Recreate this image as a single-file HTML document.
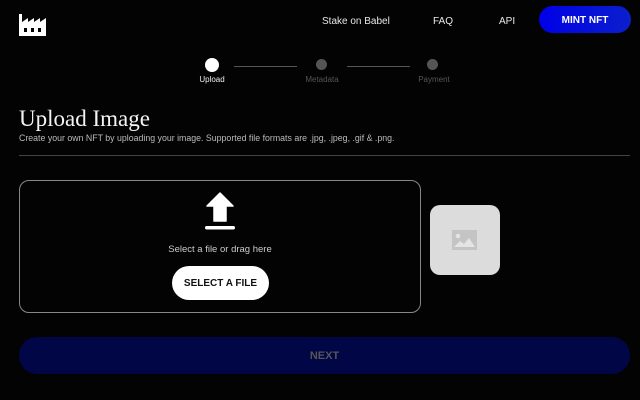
<!DOCTYPE html>
<html><head><meta charset="utf-8"><style>
*{margin:0;padding:0;box-sizing:border-box}
body{width:640px;height:400px;background:#030303;position:relative;overflow:hidden;font-family:"Liberation Sans",sans-serif;color:#fff}
.a{position:absolute}
.nav{font-size:10px;color:#e8e8e8;top:16px}
.lbl{font-size:8px;top:75px;transform:translateX(-50%)}
</style></head><body>
<svg class="a" style="left:16px;top:12px" width="32" height="26" viewBox="0 0 32 26">
<path d="M3 2h3v8l6-4v4l6-4v4l6-4v4l6-4v18H3z" fill="#fff"/>
<rect x="8" y="16" width="3" height="4" fill="#030303"/><rect x="15" y="16" width="3" height="4" fill="#030303"/><rect x="22" y="16" width="3" height="4" fill="#030303"/>
</svg>
<div class="a nav" style="left:322px">Stake on Babel</div>
<div class="a nav" style="left:433px">FAQ</div>
<div class="a nav" style="left:499px">API</div>
<div class="a" style="left:539px;top:6px;width:92px;height:27px;border-radius:14px;background:linear-gradient(90deg,#0000e6,#0b1fcc);font-size:10px;font-weight:bold;text-align:center;line-height:29px">MINT NFT</div>
<div class="a" style="left:205px;top:58px;width:14px;height:14px;border-radius:50%;background:#fff"></div>
<div class="a" style="left:316px;top:59px;width:11px;height:11px;border-radius:50%;background:#555"></div>
<div class="a" style="left:427px;top:59px;width:11px;height:11px;border-radius:50%;background:#555"></div>
<div class="a" style="left:234px;top:66px;width:63px;height:1px;background:#555"></div>
<div class="a" style="left:347px;top:66px;width:63px;height:1px;background:#555"></div>
<div class="a lbl" style="left:212px;color:#eee">Upload</div>
<div class="a lbl" style="left:322px;color:#555">Metadata</div>
<div class="a lbl" style="left:434px;color:#555">Payment</div>
<div class="a" style="left:19px;top:106px;font-family:'Liberation Serif',serif;font-size:23px;color:#f4f4f4">Upload Image</div>
<div class="a" style="left:19px;top:133px;font-size:9.5px;color:#bbb;white-space:nowrap;transform:scaleX(0.925);transform-origin:left">Create your own NFT by uploading your image. Supported file formats are .jpg, .jpeg, .gif &amp; .png.</div>
<div class="a" style="left:19px;top:155px;width:611px;height:1px;background:#444"></div>
<div class="a" style="left:19px;top:180px;width:402px;height:133px;border:1px solid #888;border-radius:10px"></div>
<svg class="a" style="left:200px;top:190px" width="40" height="42" viewBox="0 0 40 42">
<path d="M20 3L33 16H26V31H14V16H7z" fill="#fff" stroke="#fff" stroke-width="1.5" stroke-linejoin="round"/>
<rect x="5" y="36" width="30" height="3.5" rx="1.7" fill="#fff"/>
</svg>
<div class="a" style="left:120px;width:200px;top:244px;text-align:center;font-size:9.5px;color:#ccc">Select a file or drag here</div>
<div class="a" style="left:172px;top:266px;width:97px;height:34px;border-radius:17px;background:#fff;color:#111;font-size:10px;font-weight:bold;text-align:center;line-height:36px">SELECT A FILE</div>
<div class="a" style="left:430px;top:205px;width:70px;height:70px;border-radius:10px;background:#dcdcdc"></div>
<svg class="a" style="left:452px;top:230px" width="25" height="20" viewBox="0 0 25 20">
<rect width="25" height="20" fill="#c4c4c4"/>
<circle cx="6" cy="6" r="2.3" fill="#e4e4e4"/>
<path d="M2 17l6-6 4 3 5-6 6 9z" fill="#e4e4e4"/>
</svg>
<div class="a" style="left:19px;top:337px;width:611px;height:37px;border-radius:18px;background:#010647;color:#555;font-size:11px;font-weight:bold;text-align:center;line-height:39px">NEXT</div>
</body></html>
